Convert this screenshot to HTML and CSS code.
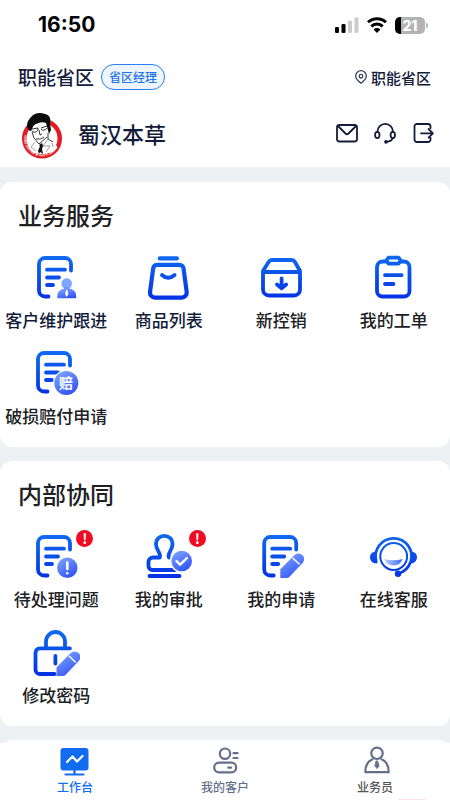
FILE: index.html
```html
<!DOCTYPE html>
<html lang="zh-CN">
<head>
<meta charset="utf-8">
<meta name="viewport" content="width=device-width, initial-scale=1">
<title>工作台</title>
<link rel="stylesheet" href="styles.css">
</head>
<body>
<svg class="defs" aria-hidden="true">
  <defs>
    <linearGradient id="blue" gradientUnits="userSpaceOnUse" x1="0" y1="0" x2="0" y2="46">
      <stop offset="0" stop-color="#0f6cf0"/><stop offset="1" stop-color="#0530e4"/>
    </linearGradient>
    <linearGradient id="soft" x1="0" y1="0" x2="0.6" y2="1">
      <stop offset="0" stop-color="#86abff"/><stop offset="1" stop-color="#3355f6"/>
    </linearGradient>
    <linearGradient id="smile" x1="0" y1="0" x2="1" y2="0">
      <stop offset="0" stop-color="#c3d4ff"/><stop offset="1" stop-color="#3b62f5"/>
    </linearGradient>
    <g id="sheet">
      <path d="M38 15.500V9a6 6 0 0 0-6-6H12a6 6 0 0 0-6 6v26.500a6 6 0 0 0 6 6h3.500"/>
      <path d="M14 14.700H32M14 22.500H26M14 30H20"/>
    </g>
    <g id="pencil">
      <path d="M23.300 45V36.200L37.300 22.200a5.500 5.500 0 0 1 8.300 7.800L32.500 43.800q-1.200 1.200-3 1.200z" fill="url(#soft)"/>
      <path d="M36 25.200l6.200 5.800" stroke="#fff" stroke-width="1.500"/>
    </g>
  </defs>
</svg>

<header class="header">
  <div class="status">
    <span class="clock">16:50</span>
    <div class="signals">
      <svg width="24" height="18" viewBox="0 0 24 18" aria-hidden="true">
        <rect x="0" y="11" width="4" height="6" rx="1.300"/><rect x="6.500" y="8" width="4" height="9" rx="1.300"/>
        <rect x="13" y="4.500" width="4" height="12.500" rx="1.300" fill="#ccc"/><rect x="19.500" y="1.500" width="4" height="15.500" rx="1.300" fill="#ccc"/>
      </svg>
      <svg width="20" height="18" viewBox="0 0 20 18" fill="none" stroke="#000" stroke-width="3" aria-hidden="true">
        <path d="M1 6.300a12.900 12.900 0 0 1 18 0M4.300 10.400a8.200 8.200 0 0 1 11.400 0"/><path d="M6.600 13.400a4.900 4.900 0 0 1 6.800 0L10 17z" fill="#000" stroke="none"/>
      </svg>
      <span class="battery">21</span>
    </div>
  </div>
  <div class="row role-row">
    <span class="area">职能省区</span>
    <span class="role">省区经理</span>
    <span class="place">
      <svg width="14" height="14" viewBox="0 0 14 14" fill="none" stroke="#3c435b" stroke-width="1.300" aria-hidden="true"><path d="M7 13.200C4.300 11.200 1.700 9 1.700 6a5.300 5.300 0 0 1 10.600 0c0 3-2.600 5.200-5.300 7.200z"/><circle cx="7" cy="6.200" r="1.800"/></svg>
      职能省区
    </span>
  </div>
  <div class="row brand-row">
    <svg class="logo" width="44" height="50" viewBox="0 0 44 50" role="img" aria-label="好医生">
      <defs><path id="ring" d="M4.300 21.400a17.800 17.800 0 1 0 33.400 0"/></defs>
      <circle cx="21" cy="27.500" r="20" fill="#e21b23"/><circle cx="21" cy="27.500" r="15.500" fill="#fff"/>
      <text class="ring-text"><textPath href="#ring" startOffset="3">GOOD DOCTOR ★ HAO YI SHENG</textPath></text>
      <path d="M9 12C11 8 27 7 29 15l1 9-3 6 9 5c1 5-9 8-16 8S8 40 7 34l6-5-3-8z" fill="#fff"/>
      <path d="M7 18C4 12 9 7 11 5c3-3 8-4 13-2 5 1 6 5 5 9l1 7-2 4-3-11c-4-2-8 0-10 1-4 2-3 4-5 7-2 0-2-1-3-2z" fill="#0b0b0b"/>
      <path d="M11 18l6-1m3 0 6-2M11 20q3 3 6-1l0-2M20 18q3 3 6-1M18 19l1 5 2-1M15 28q5 1 8-2M11 21l2 6 5 6 8-7M27 22l0 6 5 3" fill="none" stroke="#222" stroke-width="0.900"/>
      <path d="M14 31l-4 5 5 4M27 28l-5 7 7 0-4 6M31 32l1 4" fill="none" stroke="#777" stroke-width="0.700"/>
      <path d="M18 34l3-2 1 3-1 3 1 5-3-2-1 2-1-3 2-5z" fill="#111"/>
    </svg>
    <h1>蜀汉本草</h1>
    <div class="actions">
      <button type="button" aria-label="消息"><svg viewBox="0 0 24 24"><rect x="2" y="4" width="20" height="16.500" rx="2.500"/><path d="M3 5l7.500 7.500q1.500 1.400 3 0L21 5"/></svg></button>
      <button type="button" aria-label="客服"><svg viewBox="0 0 24 24"><path d="M4.500 11V10.500a7.700 7.700 0 0 1 15.400 0v.500M19.800 17c-.700 2.400-3 3.600-6.500 3.800"/><ellipse cx="4.300" cy="14" rx="2.200" ry="3.200"/><ellipse cx="19.800" cy="14" rx="2.200" ry="3.200"/><circle cx="13" cy="20.800" r="1" fill="#141c3b"/></svg></button>
      <button type="button" aria-label="退出"><svg viewBox="0 0 24 24"><path d="M19.500 7V5.500a2.500 2.500 0 0 0-2.500-2.500H6A2.500 2.500 0 0 0 3.500 5.500v13A2.500 2.500 0 0 0 6 21h11a2.500 2.500 0 0 0 2.500-2.500V17M10 12.300H21.500M17.600 8l4.300 4.300-4.300 4.300"/></svg></button>
    </div>
  </div>
</header>

<main>
  <section class="card">
    <h2>业务服务</h2>
    <div class="grid">
      <a class="item navy" href="#">
        <svg viewBox="0 0 48 48"><use href="#sheet" transform="translate(1 1)"/><g stroke="none"><path d="M25.300 44.200v-2c0-4.500 3-7 6.300-7.500h6.300c3.300.500 6.300 3 6.300 7.500v2z" fill="url(#soft)"/><circle cx="34.700" cy="29.500" r="5.300" fill="#7fa6fe"/><path d="M32 33h5.500v3H32z" fill="#7195fc"/><path d="M34.100 36h1.300l1 4-1.700 3-1.600-3z" fill="#fff"/></g></svg>
        <span>客户维护跟进</span></a>
      <a class="item navy" href="#">
        <svg viewBox="0 0 48 48"><path d="M14.800 4.400H31.900M12.500 10.800h22a4 4 0 0 1 4 3.600L41.700 38a5 5 0 0 1-5 5.600H10A5 5 0 0 1 5 38l3.200-23.600a4 4 0 0 1 4.300-3.600z" stroke-width="4.200"/><path d="M17 21q6.300 5.500 12.600 0"/></svg>
        <span>商品列表</span></a>
      <a class="item" href="#">
        <svg viewBox="0 0 48 48"><path d="M6 17L11.600 8a4 4 0 0 1 3.400-2H34.600a4 4 0 0 1 3.400 2L43 17V35.500a6 6 0 0 1-6 6H12a6 6 0 0 1-6-6zM6 18H43"/><path d="M24.600 24.500V34M20 30.500l4.600 3.800 4.600-3.800"/></svg>
        <span>新控销</span></a>
      <a class="item" href="#">
        <svg viewBox="0 0 48 48"><path d="M15 7.500h-2.500a5.500 5.500 0 0 0-5.500 5.500v24a5.500 5.500 0 0 0 5.500 5.500H34a5.500 5.500 0 0 0 5.500-5.500V13A5.500 5.500 0 0 0 34 7.500h-2.500M15 21.200H31.600M15 30H23.500"/><path d="M18.500 3.600h10l2.300 3-2.300 3h-10l-2.300-3z"/></svg>
        <span>我的工单</span></a>
      <a class="item" href="#">
        <svg viewBox="0 0 48 48"><use href="#sheet"/><g stroke="none"><circle cx="34.300" cy="33" r="13.200" fill="#fff"/><circle cx="34.300" cy="33" r="12" fill="url(#soft)"/><text class="icon-text" x="34" y="38">赔</text></g></svg>
        <span>破损赔付申请</span></a>
    </div>
  </section>

  <section class="card">
    <h2>内部协同</h2>
    <div class="grid">
      <a class="item" href="#">
        <svg viewBox="0 0 48 48"><use href="#sheet" transform="translate(0 1)"/><g stroke="none"><circle cx="35.300" cy="34.700" r="11.400" fill="#fff"/><circle cx="35.300" cy="34.700" r="10.200" fill="url(#soft)"/></g><path d="M35.300 29.500V36M35.300 40.200v.100" stroke="#fff" stroke-width="2.600"/></svg>
        <i class="alert">!</i><span>待处理问题</span></a>
      <a class="item" href="#">
        <svg viewBox="0 0 48 48"><path d="M14.700 24.500c2-4-3.500-7-3.700-13C11 6 14.500 2.800 19.200 2.800S27.500 6 27.500 11.500c-.200 6-5.500 9-3.600 13M14.700 24.500H8a4.500 4.500 0 0 0-4.500 4.500v4a4 4 0 0 0 4 4H30M4.500 43H34.500"/><g stroke="none"><circle cx="36.700" cy="28" r="11.800" fill="#fff"/><circle cx="36.700" cy="28" r="10.300" fill="url(#soft)"/></g><path d="M31.500 28l3.600 3.700 6.800-6.700" stroke="#fff" stroke-width="2.400"/></svg>
        <i class="alert">!</i><span>我的审批</span></a>
      <a class="item" href="#">
        <svg viewBox="0 0 48 48"><use href="#sheet" transform="translate(1.200 1)"/><use href="#pencil" stroke="none"/></svg>
        <span>我的申请</span></a>
      <a class="item" href="#">
        <svg viewBox="0 0 48 48"><path d="M6.200 28A18 18 0 1 1 40.800 28.500C38.500 35 34 39 28.300 40.500" stroke-width="2.800"/><circle cx="23.700" cy="23.500" r="13.400" stroke-width="2"/><g stroke="none"><path d="M5.500 18.500C2 19 0 21 0 24.300s2.500 6 5.500 6h2.200l-2-6zM41.500 18.500c3.500.500 5.500 2.500 5.500 5.800s-2.500 6-5.500 6h-1.200l1.300-6z" fill="url(#blue)"/><circle cx="28" cy="40.700" r="3.200" fill="url(#blue)"/><path d="M14 26q9.300 2.500 18.700 0-2.500 6.500-9.400 6.500T14 26z" fill="url(#smile)"/></g></svg>
        <span>在线客服</span></a>
      <a class="item" href="#">
        <svg viewBox="0 0 48 48"><path d="M14 19V12.500a9.500 9.500 0 0 1 19 0V19M38 19.300H8A4.500 4.500 0 0 0 3.500 24v16.500a4.500 4.500 0 0 0 4.500 4.500H22.500M23.400 27v7.500"/><use href="#pencil" stroke="none" transform="translate(1.200 2)"/></svg>
        <span>修改密码</span></a>
    </div>
  </section>
  <section class="card next" aria-hidden="true"></section>
</main>

<nav class="tabs">
  <a class="tab active" href="#"><svg viewBox="0 0 32 32"><rect x="1.500" y="3" width="28" height="22.500" rx="3" fill="#116cf0" stroke="none"/><path d="M8 17l5.500-5.500 4.500 5 5.500-5.500" stroke="#fff"/><path d="M15.500 25v4M6.500 29.500H24.500" stroke="#116cf0"/></svg>工作台</a>
  <a class="tab" href="#"><svg viewBox="0 0 32 32"><circle cx="16" cy="8.700" r="5.200"/><rect x="5.200" y="17.700" width="22" height="9.600" rx="4.800"/><path d="M24.500 8.200H28.500M24.500 13H28.500M19.300 22.700h2.700"/></svg>我的客户</a>
  <a class="tab plain" href="#"><svg viewBox="0 0 32 32"><circle cx="18" cy="8.300" r="5.700"/><path d="M13.500 14.300C9 16 6.300 20 6.300 27.200H29.700C29.700 20 27 16 22.500 14.300"/><path d="M17.500 16h1l1.500 5-2 2.500-2-2.500z" fill="#64708a" stroke-width="1"/></svg>业务员</a>
</nav>
</body>
</html>
```
FILE: styles.css
```css
* { box-sizing: border-box; }

body {
  margin: 0;
  min-height: 100vh;
  display: flex;
  flex-direction: column;
  background: #edf1f3;
  color: #202124;
  font-family: "Noto Sans CJK SC", sans-serif;
  font-weight: 500;
}

a { color: inherit; text-decoration: none; }
h1, h2 { margin: 0; font-weight: 500; }
.defs { position: absolute; width: 0; height: 0; }

.header {
  background: #fff;
  color: #141c3b;
  padding-bottom: 6px;
}

.status {
  display: flex;
  justify-content: space-between;
  align-items: center;
  height: 50px;
  padding: 0 25px 0 38px;
  color: #000;
}

.clock { font: 700 21px/24px Inter, sans-serif; }

.signals { display: flex; align-items: center; gap: 8px; }

.battery {
  position: relative;
  width: 30px;
  border-radius: 5px;
  background: linear-gradient(90deg, #000 6px, #b3b3b3 6px);
  color: #fff;
  font: 800 14px/17px Inter, sans-serif;
  text-align: center;
}

.battery::after {
  content: "";
  position: absolute;
  right: -3px;
  top: 6px;
  width: 2px;
  height: 5px;
  border-radius: 0 2px 2px 0;
  background: #b3b3b3;
}

.row { display: flex; align-items: center; }

.role-row { height: 54px; padding: 0 19px 0 18px; gap: 7px; }
.area { font-size: 19px; line-height: 28px; }

.role {
  padding: 0 7px;
  border: 1px solid #2b7df0;
  border-radius: 13px;
  background: #edf5fe;
  color: #1f74ea;
  font-size: 12px;
  line-height: 24px;
}

.place {
  display: flex;
  align-items: center;
  gap: 3px;
  margin-left: auto;
  font-size: 15px;
}

.brand-row { height: 57px; padding: 0 15px 0 21px; gap: 13px; }
.brand-row h1 { font-size: 22px; line-height: 32px; }
.logo { align-self: flex-end; }
.ring-text { fill: #fff; font: 700 3px "Liberation Sans", sans-serif; }

.actions { display: flex; gap: 14px; margin-left: auto; }
.actions button { padding: 0; border: 0; background: none; height: 24px; }

.actions svg {
  display: block;
  width: 24px;
  height: 24px;
  fill: none;
  stroke: #141c3b;
  stroke-width: 1.8;
  stroke-linecap: round;
  stroke-linejoin: round;
}

main {
  flex: 1;
  display: flex;
  flex-direction: column;
  gap: 14px;
  padding-top: 15px;
}

.card {
  padding: 15px 0 19px;
  border-radius: 12px;
  background: #fff;
}

.card h2 { padding: 0 18px; font-size: 24px; line-height: 36px; }

.grid {
  display: grid;
  grid-template-columns: repeat(4, 1fr);
  row-gap: 18px;
  padding-top: 21px;
}

.item {
  position: relative;
  display: flex;
  flex-direction: column;
  align-items: center;
  gap: 6px;
  font-size: 17px;
  line-height: 24px;
  white-space: nowrap;
}

.navy { color: #141c3b; }

.item svg {
  width: 48px;
  height: 48px;
  fill: none;
  stroke: url(#blue);
  stroke-width: 3.8;
  stroke-linecap: round;
  stroke-linejoin: round;
}

.icon-text { fill: #fff; font-size: 14px; font-weight: 700; text-anchor: middle; }

.alert {
  position: absolute;
  top: -3px;
  left: calc(50% + 20px);
  width: 17px;
  border-radius: 50%;
  background: #f00a24;
  color: #fff;
  font: 700 14px/17px "Noto Sans CJK SC", sans-serif;
  text-align: center;
}

.next { flex: 1; padding: 2px 0 0; border-radius: 12px 12px 0 0; }

.tabs {
  position: fixed;
  left: 0;
  right: 0;
  bottom: 0;
  display: flex;
  padding: 2px 0 4px;
  background: #fff;
  color: #64708a;
}

.tab {
  flex: 1;
  display: flex;
  flex-direction: column;
  align-items: center;
  gap: 1px;
  font-size: 12px;
  line-height: 18px;
}

.active { color: #116cf0; }
.plain { color: #555; }

.tab svg {
  width: 32px;
  height: 32px;
  fill: none;
  stroke: #64708a;
  stroke-width: 2.2;
  stroke-linecap: round;
  stroke-linejoin: round;
}

.plain::after {
  content: "";
  position: absolute;
  right: 24px;
  bottom: 0;
  width: 27px;
  height: 1px;
  background: #fbe3e6;
}
```
